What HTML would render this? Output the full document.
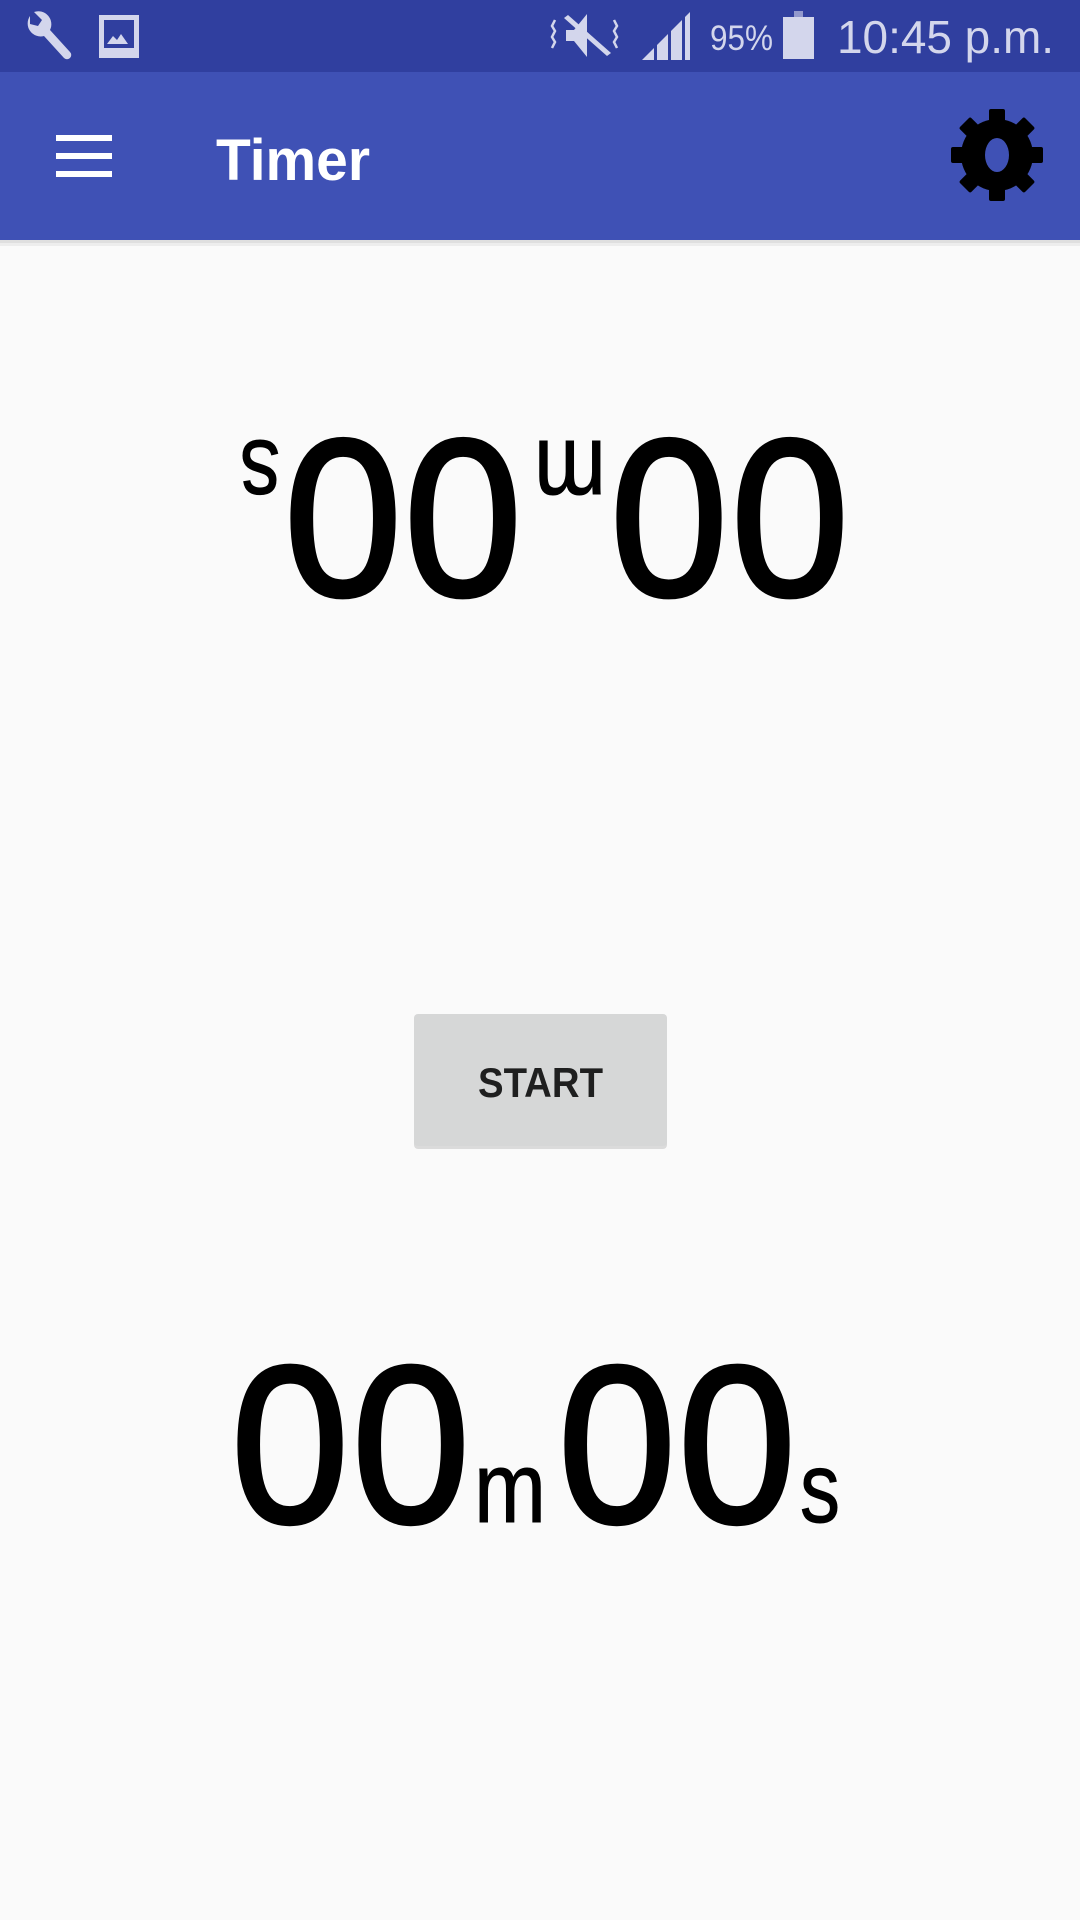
<!DOCTYPE html>
<html><head><meta charset="utf-8"><style>
html,body{margin:0;padding:0;width:1080px;height:1920px;background:#fafafa;overflow:hidden}
svg{position:absolute;left:0;top:0}
</style></head><body>
<svg width="1080" height="1920" viewBox="0 0 1080 1920" xmlns="http://www.w3.org/2000/svg">
<rect x="0" y="0" width="1080" height="72" fill="#303f9f"/>
<rect x="0" y="72" width="1080" height="168" fill="#3f51b5"/>
<rect x="0" y="240" width="1080" height="6" fill="#000" opacity="0.05"/>
<rect x="0" y="240" width="1080" height="3" fill="#000" opacity="0.06"/>
<!-- status icons -->
<g fill="#d3d6ec">
<path d="M30 16 a13 13 0 0 0 14 20 l20 22 a4 4 0 0 0 6 -6 l-20 -22 a13 13 0 0 0 -16 -18 l8 8 -4 6 -8 -2z"/>
<path d="M99 15 h40 v43 h-40z M104 20 v28 h30 v-28z" fill-rule="evenodd"/>
<path d="M107 44 l6 -8 4 4 4 -6 7 10z"/>
<path d="M566 30 h8 l13 -16 v43 l-13 -16 h-8z"/>
<path d="M564 18 l4 -3 43 38 -4 3z"/>
<path d="M555 20 l-3 6 3 5 -3 6 3 5 -3 6 M614 20 l3 6 -3 5 3 6 -3 5 3 6" fill="none" stroke="#d3d6ec" stroke-width="2.5"/>
<path d="M642 60 L654 48 V60z"/>
<path d="M657 60 V45 L668 34 V60z"/>
<path d="M671 60 V31 L682 20 V60z"/>
<path d="M685 60 V17 L690 12 V60z"/>
<rect x="783" y="17" width="31" height="42"/>
<rect x="794" y="11" width="9" height="6" opacity="0.6"/>
</g>
<text x="710" y="50" font-family="Liberation Sans,sans-serif" font-size="35" fill="#d3d6ec" textLength="63" lengthAdjust="spacingAndGlyphs">95%</text>
<text x="837" y="53" font-family="Liberation Sans,sans-serif" font-size="46" fill="#d3d6ec" textLength="217" lengthAdjust="spacingAndGlyphs">10:45 p.m.</text>
<!-- app bar -->
<g fill="#fff"><rect x="56" y="135" width="56" height="6"/><rect x="56" y="153" width="56" height="6"/><rect x="56" y="171" width="56" height="6"/></g>
<text x="216" y="180" font-family="Liberation Sans,sans-serif" font-weight="bold" font-size="58" fill="#fff" textLength="154" lengthAdjust="spacingAndGlyphs">Timer</text>
<g transform="translate(997,155)">
<circle r="36" fill="#000"/>
<g fill="#000">
<rect x="-8" y="-46" width="16" height="92" rx="2"/>
<rect x="-8" y="-46" width="16" height="92" rx="2" transform="rotate(45)"/>
<rect x="-8" y="-46" width="16" height="92" rx="2" transform="rotate(90)"/>
<rect x="-8" y="-46" width="16" height="92" rx="2" transform="rotate(135)"/>
</g>
<ellipse rx="12" ry="17" fill="#3f51b5"/>
</g>
<!-- button -->
<rect x="414" y="1017" width="253" height="132" rx="4" fill="#000" opacity="0.12"/>
<rect x="414" y="1014" width="253" height="132" rx="4" fill="#d6d7d7"/>
<text x="540.5" y="1097" text-anchor="middle" font-family="Liberation Sans,sans-serif" font-weight="bold" font-size="42" fill="#1f1f1f" textLength="125" lengthAdjust="spacingAndGlyphs">START</text>
<!-- bottom row -->
<g id="row" font-family="Liberation Sans,sans-serif" fill="#000" stroke="#000">
<g font-size="224" text-anchor="middle" stroke-width="4">
<text x="290" y="1522" textLength="118" lengthAdjust="spacingAndGlyphs">0</text><text x="411" y="1522" textLength="118" lengthAdjust="spacingAndGlyphs">0</text>
<text x="617" y="1522" textLength="118" lengthAdjust="spacingAndGlyphs">0</text><text x="737" y="1522" textLength="118" lengthAdjust="spacingAndGlyphs">0</text>
</g>
<g font-size="100" text-anchor="middle" stroke-width="1">
<text x="510" y="1522" textLength="72" lengthAdjust="spacingAndGlyphs">m</text>
<text x="820" y="1522" textLength="40" lengthAdjust="spacingAndGlyphs">s</text>
</g>
</g>
<use href="#row" transform="rotate(180 540 981.5)"/>
</svg>
</body></html>
